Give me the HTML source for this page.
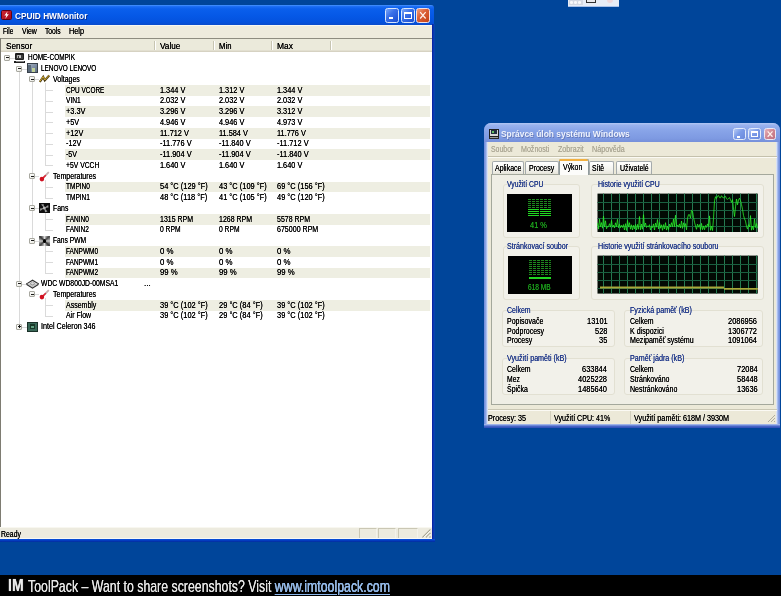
<!DOCTYPE html>
<html><head><meta charset="utf-8"><style>
html,body{margin:0;padding:0;}
body{width:781px;height:596px;overflow:hidden;position:relative;background:#00459A;font-family:"Liberation Sans", sans-serif;}
svg{display:block;}
#root{position:absolute;left:0;top:0;width:781px;height:596px;will-change:transform;}
</style></head><body><div id="root">
<div style="position:absolute;left:567.80px;top:0.00px;width:51.20px;height:7.00px;background:#E6ECF6;border-bottom:1px solid #A8C0E8;box-sizing:border-box;"></div><div style="position:absolute;left:568.50px;top:0.00px;width:14.50px;height:5.20px;background:#D4D8E2;"></div><div style="position:absolute;left:570.20px;top:1.00px;width:2.60px;height:2.60px;background:#F8F8FA;border-radius:50%;"></div><div style="position:absolute;left:574.20px;top:1.00px;width:2.60px;height:2.60px;background:#F8F8FA;border-radius:50%;"></div><div style="position:absolute;left:578.20px;top:1.00px;width:2.60px;height:2.60px;background:#F8F8FA;border-radius:50%;"></div><div style="position:absolute;left:585.50px;top:0.00px;width:10.50px;height:2.80px;border:1.2px solid #303030;border-top:none;box-sizing:border-box;background:#E8E8EC;"></div><div style="position:absolute;left:607.00px;top:0.00px;width:5.50px;height:2.60px;background:#EED8DC;border-radius:0 0 3px 3px;"></div><div style="position:absolute;left:0.00px;top:5.00px;width:434.00px;height:19.50px;background:linear-gradient(#4A96FF 0%,#1A6CF4 8%,#0A5FEC 20%,#0558E6 55%,#0452DE 85%,#0A4CCC 100%);border-radius:0 3px 0 0;"></div><div style="position:absolute;left:431.50px;top:24.00px;width:3.50px;height:517.60px;background:linear-gradient(90deg,#0820A0 0%,#0A28A8 30%,#0840B4 60%,#0546A8 100%);"></div><div style="position:absolute;left:0.00px;top:538.50px;width:434.60px;height:3.10px;background:linear-gradient(#0A52DC,#043CC0 50%,#022C9C);"></div><div style="position:absolute;left:1.20px;top:10.20px;width:10.40px;height:10.20px;background:linear-gradient(135deg,#D02838,#A00818);border:1px solid #600010;box-sizing:border-box;border-radius:1.5px;"></div><svg style="position:absolute;left:1.20px;top:10.20px;" width="11" height="10" viewBox="0 0 11 10"><path d="M6.6 1.2 L3.4 5.6 L5.4 5.6 L4.2 9 L7.8 4.2 L5.8 4.2 Z" fill="#fff"/></svg><div style="position:absolute;left:14.90px;top:11.63px;font-size:8.8px;line-height:8.8px;height:8.8px;color:#fff;font-weight:bold;white-space:pre;transform:scaleX(0.9434);transform-origin:0 0;text-shadow:0.8px 0.8px 0 #0A2C8C;">CPUID HWMonitor</div><div style="position:absolute;left:385.00px;top:8.00px;width:14.00px;height:14.60px;background:linear-gradient(135deg,#7CA8F8,#3A70E8 40%,#2458D8 80%,#1E50D0);border:1px solid #D8E6FC;border-radius:2.5px;box-sizing:border-box;"></div><div style="position:absolute;left:388.92px;top:17.34px;width:3.92px;height:2.04px;background:#fff;"></div><div style="position:absolute;left:401.00px;top:8.00px;width:13.60px;height:14.60px;background:linear-gradient(135deg,#7CA8F8,#3A70E8 40%,#2458D8 80%,#1E50D0);border:1px solid #D8E6FC;border-radius:2.5px;box-sizing:border-box;"></div><div style="position:absolute;left:403.99px;top:11.80px;width:7.62px;height:6.72px;border:1px solid #fff;border-top-width:2px;box-sizing:border-box;"></div><div style="position:absolute;left:416.40px;top:8.00px;width:13.80px;height:14.60px;background:linear-gradient(135deg,#F0A080,#DC6238 40%,#CC4C22 80%,#C04418);border:1px solid #F4E0E0;border-radius:2.5px;box-sizing:border-box;"></div><svg style="position:absolute;left:416.40px;top:8.00px;" width="13.8" height="14.6" viewBox="0 0 13.8 14.6"><path d="M4.14 4.09 L9.66 10.51 M9.66 4.09 L4.14 10.51" stroke="#FFF4EE" stroke-width="1.2"/></svg><div style="position:absolute;left:0.00px;top:24.50px;width:431.50px;height:13.50px;background:#EEEBDD;"></div><div style="position:absolute;left:0.00px;top:24.50px;width:431.50px;height:1.00px;background:#F8F8F2;"></div><div style="position:absolute;left:3.40px;top:27.00px;font-size:8.6px;line-height:8.6px;height:8.6px;color:#000;font-weight:normal;white-space:pre;transform:scaleX(0.7505);transform-origin:0 0;text-shadow:0 0 0.24px #000;">File</div><div style="position:absolute;left:22.00px;top:27.00px;font-size:8.6px;line-height:8.6px;height:8.6px;color:#000;font-weight:normal;white-space:pre;transform:scaleX(0.8047);transform-origin:0 0;text-shadow:0 0 0.24px #000;">View</div><div style="position:absolute;left:45.30px;top:27.00px;font-size:8.6px;line-height:8.6px;height:8.6px;color:#000;font-weight:normal;white-space:pre;transform:scaleX(0.7846);transform-origin:0 0;text-shadow:0 0 0.24px #000;">Tools</div><div style="position:absolute;left:69.30px;top:27.00px;font-size:8.6px;line-height:8.6px;height:8.6px;color:#000;font-weight:normal;white-space:pre;transform:scaleX(0.8481);transform-origin:0 0;text-shadow:0 0 0.24px #000;">Help</div><div style="position:absolute;left:0.00px;top:38.00px;width:431.50px;height:489.00px;background:#fff;"></div><div style="position:absolute;left:0.00px;top:38.00px;width:431.50px;height:1.00px;background:#8E8C80;"></div><div style="position:absolute;left:0.00px;top:38.00px;width:1.00px;height:488.50px;background:#7E7C72;"></div><div style="position:absolute;left:1.00px;top:39.00px;width:430.50px;height:12.00px;background:#EBEADB;"></div><div style="position:absolute;left:1.00px;top:49.50px;width:430.50px;height:1.00px;background:#E2DFD0;"></div><div style="position:absolute;left:1.00px;top:50.50px;width:430.50px;height:1.00px;background:#D6D2C2;"></div><div style="position:absolute;left:154.00px;top:40.50px;width:1.00px;height:9.50px;background:#C7C5B2;"></div><div style="position:absolute;left:155.00px;top:40.50px;width:1.00px;height:9.50px;background:#fff;"></div><div style="position:absolute;left:213.10px;top:40.50px;width:1.00px;height:9.50px;background:#C7C5B2;"></div><div style="position:absolute;left:214.10px;top:40.50px;width:1.00px;height:9.50px;background:#fff;"></div><div style="position:absolute;left:270.70px;top:40.50px;width:1.00px;height:9.50px;background:#C7C5B2;"></div><div style="position:absolute;left:271.70px;top:40.50px;width:1.00px;height:9.50px;background:#fff;"></div><div style="position:absolute;left:330.00px;top:40.50px;width:1.00px;height:9.50px;background:#C7C5B2;"></div><div style="position:absolute;left:331.00px;top:40.50px;width:1.00px;height:9.50px;background:#fff;"></div><div style="position:absolute;left:5.60px;top:41.56px;font-size:8.4px;line-height:8.4px;height:8.4px;color:#000;font-weight:normal;white-space:pre;transform:scaleX(0.9844);transform-origin:0 0;text-shadow:0 0 0.24px #000;">Sensor</div><div style="position:absolute;left:159.80px;top:41.56px;font-size:8.4px;line-height:8.4px;height:8.4px;color:#000;font-weight:normal;white-space:pre;transform:scaleX(0.9775);transform-origin:0 0;text-shadow:0 0 0.24px #000;">Value</div><div style="position:absolute;left:218.70px;top:41.56px;font-size:8.4px;line-height:8.4px;height:8.4px;color:#000;font-weight:normal;white-space:pre;transform:scaleX(0.9235);transform-origin:0 0;text-shadow:0 0 0.24px #000;">Min</div><div style="position:absolute;left:277.00px;top:41.56px;font-size:8.4px;line-height:8.4px;height:8.4px;color:#000;font-weight:normal;white-space:pre;transform:scaleX(1.0083);transform-origin:0 0;text-shadow:0 0 0.24px #000;">Max</div><div style="position:absolute;left:19.20px;top:66.72px;width:1.00px;height:260.00px;background:#DADADA;"></div><div style="position:absolute;left:32.00px;top:77.47px;width:1.00px;height:163.25px;background:#DADADA;"></div><div style="position:absolute;left:32.00px;top:292.48px;width:1.00px;height:2.00px;background:#DADADA;"></div><div style="position:absolute;left:45.00px;top:83.47px;width:1.00px;height:82.00px;background:#DADADA;"></div><div style="position:absolute;left:45.00px;top:180.22px;width:1.00px;height:17.50px;background:#DADADA;"></div><div style="position:absolute;left:45.00px;top:212.47px;width:1.00px;height:17.50px;background:#DADADA;"></div><div style="position:absolute;left:45.00px;top:244.72px;width:1.00px;height:28.25px;background:#DADADA;"></div><div style="position:absolute;left:45.00px;top:298.48px;width:1.00px;height:17.50px;background:#DADADA;"></div><div style="position:absolute;left:10.00px;top:57.98px;width:4.50px;height:1.00px;background:#DADADA;"></div><div style="position:absolute;left:19.20px;top:68.72px;width:-2.80px;height:1.00px;background:#DADADA;"></div><div style="position:absolute;left:22.40px;top:68.72px;width:4.40px;height:1.00px;background:#DADADA;"></div><div style="position:absolute;left:32.00px;top:79.47px;width:-2.60px;height:1.00px;background:#DADADA;"></div><div style="position:absolute;left:35.40px;top:79.47px;width:4.00px;height:1.00px;background:#DADADA;"></div><div style="position:absolute;left:64.80px;top:84.85px;width:365.50px;height:10.75px;background:#EEEEE2;"></div><div style="position:absolute;left:45.00px;top:90.22px;width:7.50px;height:1.00px;background:#DADADA;"></div><div style="position:absolute;left:45.00px;top:100.97px;width:7.50px;height:1.00px;background:#DADADA;"></div><div style="position:absolute;left:64.80px;top:106.35px;width:365.50px;height:10.75px;background:#EEEEE2;"></div><div style="position:absolute;left:45.00px;top:111.72px;width:7.50px;height:1.00px;background:#DADADA;"></div><div style="position:absolute;left:45.00px;top:122.47px;width:7.50px;height:1.00px;background:#DADADA;"></div><div style="position:absolute;left:64.80px;top:127.85px;width:365.50px;height:10.75px;background:#EEEEE2;"></div><div style="position:absolute;left:45.00px;top:133.22px;width:7.50px;height:1.00px;background:#DADADA;"></div><div style="position:absolute;left:45.00px;top:143.97px;width:7.50px;height:1.00px;background:#DADADA;"></div><div style="position:absolute;left:64.80px;top:149.35px;width:365.50px;height:10.75px;background:#EEEEE2;"></div><div style="position:absolute;left:45.00px;top:154.72px;width:7.50px;height:1.00px;background:#DADADA;"></div><div style="position:absolute;left:45.00px;top:165.47px;width:7.50px;height:1.00px;background:#DADADA;"></div><div style="position:absolute;left:32.00px;top:176.22px;width:-2.60px;height:1.00px;background:#DADADA;"></div><div style="position:absolute;left:35.40px;top:176.22px;width:4.00px;height:1.00px;background:#DADADA;"></div><div style="position:absolute;left:64.80px;top:181.60px;width:365.50px;height:10.75px;background:#EEEEE2;"></div><div style="position:absolute;left:45.00px;top:186.97px;width:7.50px;height:1.00px;background:#DADADA;"></div><div style="position:absolute;left:45.00px;top:197.72px;width:7.50px;height:1.00px;background:#DADADA;"></div><div style="position:absolute;left:32.00px;top:208.47px;width:-2.60px;height:1.00px;background:#DADADA;"></div><div style="position:absolute;left:35.40px;top:208.47px;width:4.00px;height:1.00px;background:#DADADA;"></div><div style="position:absolute;left:64.80px;top:213.85px;width:365.50px;height:10.75px;background:#EEEEE2;"></div><div style="position:absolute;left:45.00px;top:219.22px;width:7.50px;height:1.00px;background:#DADADA;"></div><div style="position:absolute;left:45.00px;top:229.97px;width:7.50px;height:1.00px;background:#DADADA;"></div><div style="position:absolute;left:32.00px;top:240.72px;width:-2.60px;height:1.00px;background:#DADADA;"></div><div style="position:absolute;left:35.40px;top:240.72px;width:4.00px;height:1.00px;background:#DADADA;"></div><div style="position:absolute;left:64.80px;top:246.10px;width:365.50px;height:10.75px;background:#EEEEE2;"></div><div style="position:absolute;left:45.00px;top:251.47px;width:7.50px;height:1.00px;background:#DADADA;"></div><div style="position:absolute;left:45.00px;top:262.23px;width:7.50px;height:1.00px;background:#DADADA;"></div><div style="position:absolute;left:64.80px;top:267.60px;width:365.50px;height:10.75px;background:#EEEEE2;"></div><div style="position:absolute;left:45.00px;top:272.98px;width:7.50px;height:1.00px;background:#DADADA;"></div><div style="position:absolute;left:19.20px;top:283.73px;width:-2.80px;height:1.00px;background:#DADADA;"></div><div style="position:absolute;left:22.40px;top:283.73px;width:4.40px;height:1.00px;background:#DADADA;"></div><div style="position:absolute;left:32.00px;top:294.48px;width:-2.60px;height:1.00px;background:#DADADA;"></div><div style="position:absolute;left:35.40px;top:294.48px;width:4.00px;height:1.00px;background:#DADADA;"></div><div style="position:absolute;left:64.80px;top:299.85px;width:365.50px;height:10.75px;background:#EEEEE2;"></div><div style="position:absolute;left:45.00px;top:305.23px;width:7.50px;height:1.00px;background:#DADADA;"></div><div style="position:absolute;left:45.00px;top:315.98px;width:7.50px;height:1.00px;background:#DADADA;"></div><div style="position:absolute;left:19.20px;top:326.73px;width:-2.80px;height:1.00px;background:#DADADA;"></div><div style="position:absolute;left:22.40px;top:326.73px;width:4.40px;height:1.00px;background:#DADADA;"></div><div style="position:absolute;left:27.80px;top:53.40px;font-size:8.6px;line-height:8.6px;height:8.6px;color:#000;font-weight:normal;white-space:pre;transform:scaleX(0.7508);transform-origin:0 0;text-shadow:0 0 0.24px #000;">HOME-COMPIK</div><div style="position:absolute;left:4.00px;top:54.98px;width:6.00px;height:6.00px;background:linear-gradient(135deg,#fff,#E8E8E0);border:1px solid #A8A8A0;border-radius:1px;box-sizing:border-box;"></div><div style="position:absolute;left:5.50px;top:57.48px;width:3.00px;height:1.00px;background:#1a1a1a;"></div><div style="position:absolute;left:15.00px;top:53.20px;width:9.00px;height:7.00px;background:#1E1E1E;border-radius:1px;"></div><div style="position:absolute;left:16.40px;top:54.50px;width:6.20px;height:4.30px;background:#3A3A3A;"></div><div style="position:absolute;left:17.20px;top:55.20px;width:4.20px;height:3.00px;border:1px solid #B0B0B0;border-right:none;border-bottom:none;box-sizing:border-box;"></div><div style="position:absolute;left:18.60px;top:56.40px;width:2.80px;height:1.80px;background:#C8C8C8;"></div><div style="position:absolute;left:14.40px;top:60.60px;width:10.30px;height:2.00px;background:#1E1E1E;"></div><div style="position:absolute;left:15.50px;top:61.20px;width:8.00px;height:0.70px;background:#888;"></div><div style="position:absolute;left:40.50px;top:64.15px;font-size:8.6px;line-height:8.6px;height:8.6px;color:#000;font-weight:normal;white-space:pre;transform:scaleX(0.7480);transform-origin:0 0;text-shadow:0 0 0.24px #000;">LENOVO LENOVO</div><div style="position:absolute;left:16.40px;top:65.72px;width:6.00px;height:6.00px;background:linear-gradient(135deg,#fff,#E8E8E0);border:1px solid #A8A8A0;border-radius:1px;box-sizing:border-box;"></div><div style="position:absolute;left:17.90px;top:68.22px;width:3.00px;height:1.00px;background:#1a1a1a;"></div><div style="position:absolute;left:26.80px;top:63.20px;width:11.10px;height:10.30px;background:linear-gradient(135deg,#A8B4C0,#7888A0 60%,#607080);border:1px solid #38404a;box-sizing:border-box;"></div><div style="position:absolute;left:28.00px;top:64.50px;width:3.00px;height:7.50px;background:#586878;"></div><div style="position:absolute;left:31.80px;top:68.00px;width:3.70px;height:4.00px;background:#C0D098;"></div><div style="position:absolute;left:53.40px;top:74.90px;font-size:8.6px;line-height:8.6px;height:8.6px;color:#000;font-weight:normal;white-space:pre;transform:scaleX(0.8135);transform-origin:0 0;text-shadow:0 0 0.24px #000;">Voltages</div><div style="position:absolute;left:29.40px;top:76.47px;width:6.00px;height:6.00px;background:linear-gradient(135deg,#fff,#E8E8E0);border:1px solid #A8A8A0;border-radius:1px;box-sizing:border-box;"></div><div style="position:absolute;left:30.90px;top:78.97px;width:3.00px;height:1.00px;background:#1a1a1a;"></div><svg style="position:absolute;left:39.40px;top:74.47px;" width="11" height="10" viewBox="0 0 11 10"><path d="M0.8 8 L4.2 3 L5.8 6.4 L10.2 1.6" stroke="#4A3A10" stroke-width="2.2" fill="none"/><path d="M0.8 7.6 L4.2 2.6 L5.8 6 L10.2 1.2" stroke="#D0A830" stroke-width="1.0" fill="none"/></svg><div style="position:absolute;left:65.90px;top:85.65px;font-size:8.6px;line-height:8.6px;height:8.6px;color:#000;font-weight:normal;white-space:pre;transform:scaleX(0.7510);transform-origin:0 0;text-shadow:0 0 0.24px #000;">CPU VCORE</div><div style="position:absolute;left:159.80px;top:85.65px;font-size:8.6px;line-height:8.6px;height:8.6px;color:#000;font-weight:normal;white-space:pre;transform:scaleX(0.8542);transform-origin:0 0;text-shadow:0 0 0.24px #000;">1.344 V</div><div style="position:absolute;left:218.70px;top:85.65px;font-size:8.6px;line-height:8.6px;height:8.6px;color:#000;font-weight:normal;white-space:pre;transform:scaleX(0.8542);transform-origin:0 0;text-shadow:0 0 0.24px #000;">1.312 V</div><div style="position:absolute;left:277.00px;top:85.65px;font-size:8.6px;line-height:8.6px;height:8.6px;color:#000;font-weight:normal;white-space:pre;transform:scaleX(0.8542);transform-origin:0 0;text-shadow:0 0 0.24px #000;">1.344 V</div><div style="position:absolute;left:65.90px;top:96.40px;font-size:8.6px;line-height:8.6px;height:8.6px;color:#000;font-weight:normal;white-space:pre;transform:scaleX(0.7723);transform-origin:0 0;text-shadow:0 0 0.24px #000;">VIN1</div><div style="position:absolute;left:159.80px;top:96.40px;font-size:8.6px;line-height:8.6px;height:8.6px;color:#000;font-weight:normal;white-space:pre;transform:scaleX(0.8542);transform-origin:0 0;text-shadow:0 0 0.24px #000;">2.032 V</div><div style="position:absolute;left:218.70px;top:96.40px;font-size:8.6px;line-height:8.6px;height:8.6px;color:#000;font-weight:normal;white-space:pre;transform:scaleX(0.8542);transform-origin:0 0;text-shadow:0 0 0.24px #000;">2.032 V</div><div style="position:absolute;left:277.00px;top:96.40px;font-size:8.6px;line-height:8.6px;height:8.6px;color:#000;font-weight:normal;white-space:pre;transform:scaleX(0.8542);transform-origin:0 0;text-shadow:0 0 0.24px #000;">2.032 V</div><div style="position:absolute;left:65.90px;top:107.15px;font-size:8.6px;line-height:8.6px;height:8.6px;color:#000;font-weight:normal;white-space:pre;transform:scaleX(0.8603);transform-origin:0 0;text-shadow:0 0 0.24px #000;">+3.3V</div><div style="position:absolute;left:159.80px;top:107.15px;font-size:8.6px;line-height:8.6px;height:8.6px;color:#000;font-weight:normal;white-space:pre;transform:scaleX(0.8542);transform-origin:0 0;text-shadow:0 0 0.24px #000;">3.296 V</div><div style="position:absolute;left:218.70px;top:107.15px;font-size:8.6px;line-height:8.6px;height:8.6px;color:#000;font-weight:normal;white-space:pre;transform:scaleX(0.8542);transform-origin:0 0;text-shadow:0 0 0.24px #000;">3.296 V</div><div style="position:absolute;left:277.00px;top:107.15px;font-size:8.6px;line-height:8.6px;height:8.6px;color:#000;font-weight:normal;white-space:pre;transform:scaleX(0.8542);transform-origin:0 0;text-shadow:0 0 0.24px #000;">3.312 V</div><div style="position:absolute;left:65.90px;top:117.90px;font-size:8.6px;line-height:8.6px;height:8.6px;color:#000;font-weight:normal;white-space:pre;transform:scaleX(0.8456);transform-origin:0 0;text-shadow:0 0 0.24px #000;">+5V</div><div style="position:absolute;left:159.80px;top:117.90px;font-size:8.6px;line-height:8.6px;height:8.6px;color:#000;font-weight:normal;white-space:pre;transform:scaleX(0.8542);transform-origin:0 0;text-shadow:0 0 0.24px #000;">4.946 V</div><div style="position:absolute;left:218.70px;top:117.90px;font-size:8.6px;line-height:8.6px;height:8.6px;color:#000;font-weight:normal;white-space:pre;transform:scaleX(0.8542);transform-origin:0 0;text-shadow:0 0 0.24px #000;">4.946 V</div><div style="position:absolute;left:277.00px;top:117.90px;font-size:8.6px;line-height:8.6px;height:8.6px;color:#000;font-weight:normal;white-space:pre;transform:scaleX(0.8542);transform-origin:0 0;text-shadow:0 0 0.24px #000;">4.973 V</div><div style="position:absolute;left:65.90px;top:128.65px;font-size:8.6px;line-height:8.6px;height:8.6px;color:#000;font-weight:normal;white-space:pre;transform:scaleX(0.8502);transform-origin:0 0;text-shadow:0 0 0.24px #000;">+12V</div><div style="position:absolute;left:159.80px;top:128.65px;font-size:8.6px;line-height:8.6px;height:8.6px;color:#000;font-weight:normal;white-space:pre;transform:scaleX(0.8557);transform-origin:0 0;text-shadow:0 0 0.24px #000;">11.712 V</div><div style="position:absolute;left:218.70px;top:128.65px;font-size:8.6px;line-height:8.6px;height:8.6px;color:#000;font-weight:normal;white-space:pre;transform:scaleX(0.8557);transform-origin:0 0;text-shadow:0 0 0.24px #000;">11.584 V</div><div style="position:absolute;left:277.00px;top:128.65px;font-size:8.6px;line-height:8.6px;height:8.6px;color:#000;font-weight:normal;white-space:pre;transform:scaleX(0.8557);transform-origin:0 0;text-shadow:0 0 0.24px #000;">11.776 V</div><div style="position:absolute;left:65.90px;top:139.40px;font-size:8.6px;line-height:8.6px;height:8.6px;color:#000;font-weight:normal;white-space:pre;transform:scaleX(0.8388);transform-origin:0 0;text-shadow:0 0 0.24px #000;">-12V</div><div style="position:absolute;left:159.80px;top:139.40px;font-size:8.6px;line-height:8.6px;height:8.6px;color:#000;font-weight:normal;white-space:pre;transform:scaleX(0.8627);transform-origin:0 0;text-shadow:0 0 0.24px #000;">-11.776 V</div><div style="position:absolute;left:218.70px;top:139.40px;font-size:8.6px;line-height:8.6px;height:8.6px;color:#000;font-weight:normal;white-space:pre;transform:scaleX(0.8627);transform-origin:0 0;text-shadow:0 0 0.24px #000;">-11.840 V</div><div style="position:absolute;left:277.00px;top:139.40px;font-size:8.6px;line-height:8.6px;height:8.6px;color:#000;font-weight:normal;white-space:pre;transform:scaleX(0.8627);transform-origin:0 0;text-shadow:0 0 0.24px #000;">-11.712 V</div><div style="position:absolute;left:65.90px;top:150.15px;font-size:8.6px;line-height:8.6px;height:8.6px;color:#000;font-weight:normal;white-space:pre;transform:scaleX(0.8294);transform-origin:0 0;text-shadow:0 0 0.24px #000;">-5V</div><div style="position:absolute;left:159.80px;top:150.15px;font-size:8.6px;line-height:8.6px;height:8.6px;color:#000;font-weight:normal;white-space:pre;transform:scaleX(0.8627);transform-origin:0 0;text-shadow:0 0 0.24px #000;">-11.904 V</div><div style="position:absolute;left:218.70px;top:150.15px;font-size:8.6px;line-height:8.6px;height:8.6px;color:#000;font-weight:normal;white-space:pre;transform:scaleX(0.8627);transform-origin:0 0;text-shadow:0 0 0.24px #000;">-11.904 V</div><div style="position:absolute;left:277.00px;top:150.15px;font-size:8.6px;line-height:8.6px;height:8.6px;color:#000;font-weight:normal;white-space:pre;transform:scaleX(0.8627);transform-origin:0 0;text-shadow:0 0 0.24px #000;">-11.840 V</div><div style="position:absolute;left:65.90px;top:160.90px;font-size:8.6px;line-height:8.6px;height:8.6px;color:#000;font-weight:normal;white-space:pre;transform:scaleX(0.7912);transform-origin:0 0;text-shadow:0 0 0.24px #000;">+5V VCCH</div><div style="position:absolute;left:159.80px;top:160.90px;font-size:8.6px;line-height:8.6px;height:8.6px;color:#000;font-weight:normal;white-space:pre;transform:scaleX(0.8542);transform-origin:0 0;text-shadow:0 0 0.24px #000;">1.640 V</div><div style="position:absolute;left:218.70px;top:160.90px;font-size:8.6px;line-height:8.6px;height:8.6px;color:#000;font-weight:normal;white-space:pre;transform:scaleX(0.8542);transform-origin:0 0;text-shadow:0 0 0.24px #000;">1.640 V</div><div style="position:absolute;left:277.00px;top:160.90px;font-size:8.6px;line-height:8.6px;height:8.6px;color:#000;font-weight:normal;white-space:pre;transform:scaleX(0.8542);transform-origin:0 0;text-shadow:0 0 0.24px #000;">1.640 V</div><div style="position:absolute;left:53.40px;top:171.65px;font-size:8.6px;line-height:8.6px;height:8.6px;color:#000;font-weight:normal;white-space:pre;transform:scaleX(0.8199);transform-origin:0 0;text-shadow:0 0 0.24px #000;">Temperatures</div><div style="position:absolute;left:29.40px;top:173.22px;width:6.00px;height:6.00px;background:linear-gradient(135deg,#fff,#E8E8E0);border:1px solid #A8A8A0;border-radius:1px;box-sizing:border-box;"></div><div style="position:absolute;left:30.90px;top:175.72px;width:3.00px;height:1.00px;background:#1a1a1a;"></div><svg style="position:absolute;left:39.40px;top:171.22px;" width="11" height="11" viewBox="0 0 11 11"><path d="M3.2 7.8 L9.8 1.2" stroke="#C8B0B0" stroke-width="1.8"/><path d="M3 8 L6.8 4.2" stroke="#E02838" stroke-width="1.6"/><circle cx="2.9" cy="8.1" r="2.3" fill="#D01020"/></svg><div style="position:absolute;left:65.90px;top:182.40px;font-size:8.6px;line-height:8.6px;height:8.6px;color:#000;font-weight:normal;white-space:pre;transform:scaleX(0.7602);transform-origin:0 0;text-shadow:0 0 0.24px #000;">TMPIN0</div><div style="position:absolute;left:159.80px;top:182.40px;font-size:8.6px;line-height:8.6px;height:8.6px;color:#000;font-weight:normal;white-space:pre;transform:scaleX(0.8684);transform-origin:0 0;text-shadow:0 0 0.24px #000;">54 °C (129 °F)</div><div style="position:absolute;left:218.70px;top:182.40px;font-size:8.6px;line-height:8.6px;height:8.6px;color:#000;font-weight:normal;white-space:pre;transform:scaleX(0.8684);transform-origin:0 0;text-shadow:0 0 0.24px #000;">43 °C (109 °F)</div><div style="position:absolute;left:277.00px;top:182.40px;font-size:8.6px;line-height:8.6px;height:8.6px;color:#000;font-weight:normal;white-space:pre;transform:scaleX(0.8684);transform-origin:0 0;text-shadow:0 0 0.24px #000;">69 °C (156 °F)</div><div style="position:absolute;left:65.90px;top:193.15px;font-size:8.6px;line-height:8.6px;height:8.6px;color:#000;font-weight:normal;white-space:pre;transform:scaleX(0.7602);transform-origin:0 0;text-shadow:0 0 0.24px #000;">TMPIN1</div><div style="position:absolute;left:159.80px;top:193.15px;font-size:8.6px;line-height:8.6px;height:8.6px;color:#000;font-weight:normal;white-space:pre;transform:scaleX(0.8684);transform-origin:0 0;text-shadow:0 0 0.24px #000;">48 °C (118 °F)</div><div style="position:absolute;left:218.70px;top:193.15px;font-size:8.6px;line-height:8.6px;height:8.6px;color:#000;font-weight:normal;white-space:pre;transform:scaleX(0.8684);transform-origin:0 0;text-shadow:0 0 0.24px #000;">41 °C (105 °F)</div><div style="position:absolute;left:277.00px;top:193.15px;font-size:8.6px;line-height:8.6px;height:8.6px;color:#000;font-weight:normal;white-space:pre;transform:scaleX(0.8684);transform-origin:0 0;text-shadow:0 0 0.24px #000;">49 °C (120 °F)</div><div style="position:absolute;left:53.40px;top:203.90px;font-size:8.6px;line-height:8.6px;height:8.6px;color:#000;font-weight:normal;white-space:pre;transform:scaleX(0.8045);transform-origin:0 0;text-shadow:0 0 0.24px #000;">Fans</div><div style="position:absolute;left:29.40px;top:205.47px;width:6.00px;height:6.00px;background:linear-gradient(135deg,#fff,#E8E8E0);border:1px solid #A8A8A0;border-radius:1px;box-sizing:border-box;"></div><div style="position:absolute;left:30.90px;top:207.97px;width:3.00px;height:1.00px;background:#1a1a1a;"></div><div style="position:absolute;left:39.40px;top:203.47px;width:10.60px;height:10.00px;background:#0E0E0E;"></div><svg style="position:absolute;left:39.40px;top:203.47px;" width="11" height="10" viewBox="0 0 11 10"><g fill="#9A9A9A"><path d="M5.3 5 L2 1.5 L4.5 1 Z"/><path d="M5.3 5 L9.2 2 L9.5 4.5 Z"/><path d="M5.3 5 L8.5 8.6 L6 9.2 Z"/><path d="M5.3 5 L1.2 8 L1 5.6 Z"/></g><circle cx="5.3" cy="5" r="1.5" fill="#BBB"/></svg><div style="position:absolute;left:65.90px;top:214.65px;font-size:8.6px;line-height:8.6px;height:8.6px;color:#000;font-weight:normal;white-space:pre;transform:scaleX(0.7607);transform-origin:0 0;text-shadow:0 0 0.24px #000;">FANIN0</div><div style="position:absolute;left:159.80px;top:214.65px;font-size:8.6px;line-height:8.6px;height:8.6px;color:#000;font-weight:normal;white-space:pre;transform:scaleX(0.8117);transform-origin:0 0;text-shadow:0 0 0.24px #000;">1315 RPM</div><div style="position:absolute;left:218.70px;top:214.65px;font-size:8.6px;line-height:8.6px;height:8.6px;color:#000;font-weight:normal;white-space:pre;transform:scaleX(0.8117);transform-origin:0 0;text-shadow:0 0 0.24px #000;">1268 RPM</div><div style="position:absolute;left:277.00px;top:214.65px;font-size:8.6px;line-height:8.6px;height:8.6px;color:#000;font-weight:normal;white-space:pre;transform:scaleX(0.8117);transform-origin:0 0;text-shadow:0 0 0.24px #000;">5578 RPM</div><div style="position:absolute;left:65.90px;top:225.40px;font-size:8.6px;line-height:8.6px;height:8.6px;color:#000;font-weight:normal;white-space:pre;transform:scaleX(0.7607);transform-origin:0 0;text-shadow:0 0 0.24px #000;">FANIN2</div><div style="position:absolute;left:159.80px;top:225.40px;font-size:8.6px;line-height:8.6px;height:8.6px;color:#000;font-weight:normal;white-space:pre;transform:scaleX(0.7825);transform-origin:0 0;text-shadow:0 0 0.24px #000;">0 RPM</div><div style="position:absolute;left:218.70px;top:225.40px;font-size:8.6px;line-height:8.6px;height:8.6px;color:#000;font-weight:normal;white-space:pre;transform:scaleX(0.7825);transform-origin:0 0;text-shadow:0 0 0.24px #000;">0 RPM</div><div style="position:absolute;left:277.00px;top:225.40px;font-size:8.6px;line-height:8.6px;height:8.6px;color:#000;font-weight:normal;white-space:pre;transform:scaleX(0.8219);transform-origin:0 0;text-shadow:0 0 0.24px #000;">675000 RPM</div><div style="position:absolute;left:53.40px;top:236.15px;font-size:8.6px;line-height:8.6px;height:8.6px;color:#000;font-weight:normal;white-space:pre;transform:scaleX(0.7813);transform-origin:0 0;text-shadow:0 0 0.24px #000;">Fans PWM</div><div style="position:absolute;left:29.40px;top:237.72px;width:6.00px;height:6.00px;background:linear-gradient(135deg,#fff,#E8E8E0);border:1px solid #A8A8A0;border-radius:1px;box-sizing:border-box;"></div><div style="position:absolute;left:30.90px;top:240.22px;width:3.00px;height:1.00px;background:#1a1a1a;"></div><div style="position:absolute;left:39.40px;top:235.92px;width:10.60px;height:10.50px;background:conic-gradient(#DDD,#444,#CCC,#333,#DDD,#444,#CCC,#333,#DDD);"></div><div style="position:absolute;left:42.90px;top:239.42px;width:3.50px;height:3.50px;background:#000;border-radius:50%;"></div><div style="position:absolute;left:65.90px;top:246.90px;font-size:8.6px;line-height:8.6px;height:8.6px;color:#000;font-weight:normal;white-space:pre;transform:scaleX(0.7552);transform-origin:0 0;text-shadow:0 0 0.24px #000;">FANPWM0</div><div style="position:absolute;left:159.80px;top:246.90px;font-size:8.6px;line-height:8.6px;height:8.6px;color:#000;font-weight:normal;white-space:pre;transform:scaleX(0.9199);transform-origin:0 0;text-shadow:0 0 0.24px #000;">0 %</div><div style="position:absolute;left:218.70px;top:246.90px;font-size:8.6px;line-height:8.6px;height:8.6px;color:#000;font-weight:normal;white-space:pre;transform:scaleX(0.9199);transform-origin:0 0;text-shadow:0 0 0.24px #000;">0 %</div><div style="position:absolute;left:277.00px;top:246.90px;font-size:8.6px;line-height:8.6px;height:8.6px;color:#000;font-weight:normal;white-space:pre;transform:scaleX(0.9199);transform-origin:0 0;text-shadow:0 0 0.24px #000;">0 %</div><div style="position:absolute;left:65.90px;top:257.65px;font-size:8.6px;line-height:8.6px;height:8.6px;color:#000;font-weight:normal;white-space:pre;transform:scaleX(0.7552);transform-origin:0 0;text-shadow:0 0 0.24px #000;">FANPWM1</div><div style="position:absolute;left:159.80px;top:257.65px;font-size:8.6px;line-height:8.6px;height:8.6px;color:#000;font-weight:normal;white-space:pre;transform:scaleX(0.9199);transform-origin:0 0;text-shadow:0 0 0.24px #000;">0 %</div><div style="position:absolute;left:218.70px;top:257.65px;font-size:8.6px;line-height:8.6px;height:8.6px;color:#000;font-weight:normal;white-space:pre;transform:scaleX(0.9199);transform-origin:0 0;text-shadow:0 0 0.24px #000;">0 %</div><div style="position:absolute;left:277.00px;top:257.65px;font-size:8.6px;line-height:8.6px;height:8.6px;color:#000;font-weight:normal;white-space:pre;transform:scaleX(0.9199);transform-origin:0 0;text-shadow:0 0 0.24px #000;">0 %</div><div style="position:absolute;left:65.90px;top:268.40px;font-size:8.6px;line-height:8.6px;height:8.6px;color:#000;font-weight:normal;white-space:pre;transform:scaleX(0.7552);transform-origin:0 0;text-shadow:0 0 0.24px #000;">FANPWM2</div><div style="position:absolute;left:159.80px;top:268.40px;font-size:8.6px;line-height:8.6px;height:8.6px;color:#000;font-weight:normal;white-space:pre;transform:scaleX(0.9066);transform-origin:0 0;text-shadow:0 0 0.24px #000;">99 %</div><div style="position:absolute;left:218.70px;top:268.40px;font-size:8.6px;line-height:8.6px;height:8.6px;color:#000;font-weight:normal;white-space:pre;transform:scaleX(0.9066);transform-origin:0 0;text-shadow:0 0 0.24px #000;">99 %</div><div style="position:absolute;left:277.00px;top:268.40px;font-size:8.6px;line-height:8.6px;height:8.6px;color:#000;font-weight:normal;white-space:pre;transform:scaleX(0.9066);transform-origin:0 0;text-shadow:0 0 0.24px #000;">99 %</div><div style="position:absolute;left:40.50px;top:279.15px;font-size:8.6px;line-height:8.6px;height:8.6px;color:#000;font-weight:normal;white-space:pre;transform:scaleX(0.7886);transform-origin:0 0;text-shadow:0 0 0.24px #000;">WDC WD800JD-00MSA1</div><div style="position:absolute;left:16.40px;top:280.73px;width:6.00px;height:6.00px;background:linear-gradient(135deg,#fff,#E8E8E0);border:1px solid #A8A8A0;border-radius:1px;box-sizing:border-box;"></div><div style="position:absolute;left:17.90px;top:283.23px;width:3.00px;height:1.00px;background:#1a1a1a;"></div><svg style="position:absolute;left:26.00px;top:278.73px;" width="13" height="10" viewBox="0 0 13 10"><path d="M1 4.6 L6.5 1.2 L12 4.6 L6.5 8 Z" fill="#F4F4F4" stroke="#303030" stroke-width="1.1"/><path d="M1 4.6 L1 5.8 L6.5 9.2 L12 5.8 L12 4.6" fill="#C8C8C8" stroke="#303030" stroke-width="1.1"/><path d="M4 4.6 L6.5 3.1 L9 4.6 L6.5 6.1 Z" fill="none" stroke="#909090" stroke-width="0.8"/></svg><div style="position:absolute;left:144.00px;top:279.15px;font-size:8.6px;line-height:8.6px;height:8.6px;color:#000;font-weight:normal;white-space:pre;transform:scaleX(0.9460);transform-origin:0 0;text-shadow:0 0 0.24px #000;">...</div><div style="position:absolute;left:53.40px;top:289.90px;font-size:8.6px;line-height:8.6px;height:8.6px;color:#000;font-weight:normal;white-space:pre;transform:scaleX(0.8199);transform-origin:0 0;text-shadow:0 0 0.24px #000;">Temperatures</div><div style="position:absolute;left:29.40px;top:291.48px;width:6.00px;height:6.00px;background:linear-gradient(135deg,#fff,#E8E8E0);border:1px solid #A8A8A0;border-radius:1px;box-sizing:border-box;"></div><div style="position:absolute;left:30.90px;top:293.98px;width:3.00px;height:1.00px;background:#1a1a1a;"></div><svg style="position:absolute;left:39.40px;top:289.48px;" width="11" height="11" viewBox="0 0 11 11"><path d="M3.2 7.8 L9.8 1.2" stroke="#C8B0B0" stroke-width="1.8"/><path d="M3 8 L6.8 4.2" stroke="#E02838" stroke-width="1.6"/><circle cx="2.9" cy="8.1" r="2.3" fill="#D01020"/></svg><div style="position:absolute;left:65.90px;top:300.65px;font-size:8.6px;line-height:8.6px;height:8.6px;color:#000;font-weight:normal;white-space:pre;transform:scaleX(0.8151);transform-origin:0 0;text-shadow:0 0 0.24px #000;">Assembly</div><div style="position:absolute;left:159.80px;top:300.65px;font-size:8.6px;line-height:8.6px;height:8.6px;color:#000;font-weight:normal;white-space:pre;transform:scaleX(0.8684);transform-origin:0 0;text-shadow:0 0 0.24px #000;">39 °C (102 °F)</div><div style="position:absolute;left:218.70px;top:300.65px;font-size:8.6px;line-height:8.6px;height:8.6px;color:#000;font-weight:normal;white-space:pre;transform:scaleX(0.8687);transform-origin:0 0;text-shadow:0 0 0.24px #000;">29 °C (84 °F)</div><div style="position:absolute;left:277.00px;top:300.65px;font-size:8.6px;line-height:8.6px;height:8.6px;color:#000;font-weight:normal;white-space:pre;transform:scaleX(0.8684);transform-origin:0 0;text-shadow:0 0 0.24px #000;">39 °C (102 °F)</div><div style="position:absolute;left:65.90px;top:311.40px;font-size:8.6px;line-height:8.6px;height:8.6px;color:#000;font-weight:normal;white-space:pre;transform:scaleX(0.8067);transform-origin:0 0;text-shadow:0 0 0.24px #000;">Air Flow</div><div style="position:absolute;left:159.80px;top:311.40px;font-size:8.6px;line-height:8.6px;height:8.6px;color:#000;font-weight:normal;white-space:pre;transform:scaleX(0.8684);transform-origin:0 0;text-shadow:0 0 0.24px #000;">39 °C (102 °F)</div><div style="position:absolute;left:218.70px;top:311.40px;font-size:8.6px;line-height:8.6px;height:8.6px;color:#000;font-weight:normal;white-space:pre;transform:scaleX(0.8687);transform-origin:0 0;text-shadow:0 0 0.24px #000;">29 °C (84 °F)</div><div style="position:absolute;left:277.00px;top:311.40px;font-size:8.6px;line-height:8.6px;height:8.6px;color:#000;font-weight:normal;white-space:pre;transform:scaleX(0.8684);transform-origin:0 0;text-shadow:0 0 0.24px #000;">39 °C (102 °F)</div><div style="position:absolute;left:40.50px;top:322.15px;font-size:8.6px;line-height:8.6px;height:8.6px;color:#000;font-weight:normal;white-space:pre;transform:scaleX(0.8336);transform-origin:0 0;text-shadow:0 0 0.24px #000;">Intel Celeron 346</div><div style="position:absolute;left:16.40px;top:323.73px;width:6.00px;height:6.00px;background:linear-gradient(135deg,#fff,#E8E8E0);border:1px solid #A8A8A0;border-radius:1px;box-sizing:border-box;"></div><div style="position:absolute;left:17.90px;top:326.23px;width:3.00px;height:1.00px;background:#1a1a1a;"></div><div style="position:absolute;left:18.90px;top:325.23px;width:1.00px;height:3.00px;background:#1a1a1a;"></div><div style="position:absolute;left:27.00px;top:321.60px;width:10.60px;height:10.00px;background:#3A6858;border:1px solid #1A3028;box-sizing:border-box;"></div><div style="position:absolute;left:29.80px;top:324.40px;width:5.00px;height:4.40px;background:#183828;"></div><div style="position:absolute;left:31.00px;top:325.60px;width:2.60px;height:2.00px;background:#60A080;"></div><div style="position:absolute;left:0.00px;top:526.50px;width:431.50px;height:12.00px;background:#EDEBDF;"></div><div style="position:absolute;left:0.00px;top:537.50px;width:431.50px;height:1.00px;background:#F8F8F4;"></div><div style="position:absolute;left:0.00px;top:526.50px;width:431.50px;height:1.00px;background:#F8F7F0;"></div><div style="position:absolute;left:1.00px;top:529.80px;font-size:8.6px;line-height:8.6px;height:8.6px;color:#000;font-weight:normal;white-space:pre;transform:scaleX(0.8045);transform-origin:0 0;text-shadow:0 0 0.24px #000;">Ready</div><div style="position:absolute;left:359.20px;top:527.80px;width:17.40px;height:10.20px;border:1px solid #CAC7B4;border-right-color:#F4F3EC;border-bottom:none;box-sizing:border-box;"></div><div style="position:absolute;left:377.80px;top:527.80px;width:18.60px;height:10.20px;border:1px solid #CAC7B4;border-right-color:#F4F3EC;border-bottom:none;box-sizing:border-box;"></div><div style="position:absolute;left:397.60px;top:527.80px;width:20.60px;height:10.20px;border:1px solid #CAC7B4;border-right-color:#F4F3EC;border-bottom:none;box-sizing:border-box;"></div><svg style="position:absolute;left:420.00px;top:527.00px;" width="11.5" height="11.5" viewBox="0 0 11.5 11.5"><path d="M10.5 2.5 L2.5 10.5 M10.5 6 L6 10.5 M10.5 9.5 L9.5 10.5" stroke="#A8A694" stroke-width="1.1"/><path d="M10.5 3.5 L3.5 10.5 M10.5 7 L7 10.5" stroke="#fff" stroke-width="0.8"/></svg><div style="position:absolute;left:484.40px;top:123.00px;width:295.20px;height:304.80px;background:#7E9AE2;border-radius:7px 7px 0 0;"></div><div style="position:absolute;left:484.40px;top:142.00px;width:4.00px;height:285.80px;background:linear-gradient(90deg,#6A88D8 0%,#8CA6E8 45%,#B8C8F0 70%,#F0F4FA 100%);"></div><div style="position:absolute;left:775.80px;top:142.00px;width:3.80px;height:285.80px;background:linear-gradient(270deg,#6A88D8 0%,#8CA6E8 45%,#B8C8F0 70%,#F0F4FA 100%);"></div><div style="position:absolute;left:484.40px;top:123.00px;width:295.20px;height:19.20px;background:linear-gradient(#B2C8F4 0%,#98B2EE 12%,#88A4E8 40%,#7E9AE2 80%,#7690DA 100%);border-radius:7px 7px 0 0;"></div><div style="position:absolute;left:484.40px;top:424.00px;width:295.20px;height:3.80px;background:linear-gradient(#B4C4EC 0%,#8AA2E2 25%,#4E6CCC 50%,#2E4CB4 100%);"></div><div style="position:absolute;left:488.40px;top:142.20px;width:287.40px;height:281.80px;background:#ECE9D8;"></div><div style="position:absolute;left:489.40px;top:128.60px;width:9.20px;height:8.40px;background:#D8D8D8;border:1px solid #1E1E1E;box-sizing:border-box;"></div><div style="position:absolute;left:490.80px;top:130.00px;width:6.40px;height:4.20px;background:#243040;"></div><div style="position:absolute;left:491.60px;top:131.00px;width:2.40px;height:1.60px;background:#60C060;"></div><div style="position:absolute;left:489.00px;top:136.60px;width:10.00px;height:2.40px;background:#2A2A2A;"></div><div style="position:absolute;left:490.00px;top:137.30px;width:8.00px;height:0.90px;background:#999;"></div><div style="position:absolute;left:501.40px;top:129.43px;font-size:9.4px;line-height:9.4px;height:9.4px;color:#EEF2FC;font-weight:bold;white-space:pre;transform:scaleX(0.8994);transform-origin:0 0;text-shadow:0.8px 0.8px 0 #6478B8;">Správce úloh systému Windows</div><div style="position:absolute;left:733.00px;top:128.00px;width:13.20px;height:12.20px;background:linear-gradient(135deg,#B8CCF4,#7C9CE8 45%,#6A8ADC);border:1px solid #E4ECFA;border-radius:2.5px;box-sizing:border-box;"></div><div style="position:absolute;left:736.70px;top:135.81px;width:3.70px;height:1.71px;background:#fff;"></div><div style="position:absolute;left:748.40px;top:128.00px;width:12.80px;height:12.20px;background:linear-gradient(135deg,#B8CCF4,#7C9CE8 45%,#6A8ADC);border:1px solid #E4ECFA;border-radius:2.5px;box-sizing:border-box;"></div><div style="position:absolute;left:751.22px;top:131.17px;width:7.17px;height:5.61px;border:1px solid #fff;border-top-width:2px;box-sizing:border-box;"></div><div style="position:absolute;left:764.00px;top:128.00px;width:12.20px;height:12.20px;background:linear-gradient(135deg,#E8B4BC,#D08894 45%,#C07080);border:1px solid #F0E8F0;border-radius:2.5px;box-sizing:border-box;"></div><svg style="position:absolute;left:764.00px;top:128.00px;" width="12.2" height="12.2" viewBox="0 0 12.2 12.2"><path d="M3.66 3.42 L8.54 8.78 M8.54 3.42 L3.66 8.78" stroke="#FFF4EE" stroke-width="1.2"/></svg><div style="position:absolute;left:490.50px;top:144.60px;font-size:8.6px;line-height:8.6px;height:8.6px;color:#ADA996;font-weight:normal;white-space:pre;transform:scaleX(0.8041);transform-origin:0 0;text-shadow:0 0 0.20px #ADA996;">Soubor</div><div style="position:absolute;left:521.30px;top:144.60px;font-size:8.6px;line-height:8.6px;height:8.6px;color:#ADA996;font-weight:normal;white-space:pre;transform:scaleX(0.8253);transform-origin:0 0;text-shadow:0 0 0.20px #ADA996;">Možnosti</div><div style="position:absolute;left:557.70px;top:144.60px;font-size:8.6px;line-height:8.6px;height:8.6px;color:#ADA996;font-weight:normal;white-space:pre;transform:scaleX(0.8305);transform-origin:0 0;text-shadow:0 0 0.20px #ADA996;">Zobrazit</div><div style="position:absolute;left:591.80px;top:144.60px;font-size:8.6px;line-height:8.6px;height:8.6px;color:#ADA996;font-weight:normal;white-space:pre;transform:scaleX(0.8340);transform-origin:0 0;text-shadow:0 0 0.20px #ADA996;">Nápověda</div><div style="position:absolute;left:487.60px;top:156.00px;width:289.00px;height:1.00px;background:#C4C1AC;"></div><div style="position:absolute;left:487.60px;top:157.00px;width:289.00px;height:1.00px;background:#FBFAF4;"></div><div style="position:absolute;left:490.50px;top:173.50px;width:283.10px;height:231.10px;background:#EFEEE5;border:1px solid #A4A89C;box-sizing:border-box;"></div><div style="position:absolute;left:491.50px;top:161.00px;width:32.90px;height:13.00px;background:linear-gradient(#FFFFFF,#F4F4EE 60%,#E6E4DA);border:1px solid #A4AAAC;border-bottom:none;border-radius:2px 2px 0 0;box-sizing:border-box;"></div><div style="position:absolute;left:495.10px;top:163.80px;font-size:8.6px;line-height:8.6px;height:8.6px;color:#000;font-weight:normal;white-space:pre;transform:scaleX(0.8131);transform-origin:0 0;text-shadow:0 0 0.24px #000;">Aplikace</div><div style="position:absolute;left:525.00px;top:161.00px;width:33.60px;height:13.00px;background:linear-gradient(#FFFFFF,#F4F4EE 60%,#E6E4DA);border:1px solid #A4AAAC;border-bottom:none;border-radius:2px 2px 0 0;box-sizing:border-box;"></div><div style="position:absolute;left:528.60px;top:163.80px;font-size:8.6px;line-height:8.6px;height:8.6px;color:#000;font-weight:normal;white-space:pre;transform:scaleX(0.8124);transform-origin:0 0;text-shadow:0 0 0.24px #000;">Procesy</div><div style="position:absolute;left:588.60px;top:161.00px;width:25.60px;height:13.00px;background:linear-gradient(#FFFFFF,#F4F4EE 60%,#E6E4DA);border:1px solid #A4AAAC;border-bottom:none;border-radius:2px 2px 0 0;box-sizing:border-box;"></div><div style="position:absolute;left:592.20px;top:163.80px;font-size:8.6px;line-height:8.6px;height:8.6px;color:#000;font-weight:normal;white-space:pre;transform:scaleX(0.7958);transform-origin:0 0;text-shadow:0 0 0.24px #000;">Sítě</div><div style="position:absolute;left:616.40px;top:161.00px;width:35.20px;height:13.00px;background:linear-gradient(#FFFFFF,#F4F4EE 60%,#E6E4DA);border:1px solid #A4AAAC;border-bottom:none;border-radius:2px 2px 0 0;box-sizing:border-box;"></div><div style="position:absolute;left:620.00px;top:163.80px;font-size:8.6px;line-height:8.6px;height:8.6px;color:#000;font-weight:normal;white-space:pre;transform:scaleX(0.8132);transform-origin:0 0;text-shadow:0 0 0.24px #000;">Uživatelé</div><div style="position:absolute;left:558.60px;top:159.40px;width:30.00px;height:15.20px;background:#FCFCFA;border:1px solid #919B9C;border-bottom:none;border-radius:2px 2px 0 0;box-sizing:border-box;"></div><div style="position:absolute;left:559.00px;top:159.40px;width:29.20px;height:2.00px;background:#F2B040;border-radius:2px 2px 0 0;"></div><div style="position:absolute;left:562.50px;top:162.60px;font-size:8.6px;line-height:8.6px;height:8.6px;color:#000;font-weight:normal;white-space:pre;transform:scaleX(0.8076);transform-origin:0 0;text-shadow:0 0 0.24px #000;">Výkon</div><div style="position:absolute;left:503.00px;top:184.40px;width:76.60px;height:53.60px;background:#F2F1EA;border:1px solid #E2E0D2;border-radius:3px;box-sizing:border-box;"></div><div style="position:absolute;left:591.00px;top:184.40px;width:172.60px;height:53.60px;background:#F2F1EA;border:1px solid #E2E0D2;border-radius:3px;box-sizing:border-box;"></div><div style="position:absolute;left:503.00px;top:246.00px;width:76.60px;height:54.00px;background:#F2F1EA;border:1px solid #E2E0D2;border-radius:3px;box-sizing:border-box;"></div><div style="position:absolute;left:591.00px;top:246.00px;width:172.60px;height:54.00px;background:#F2F1EA;border:1px solid #E2E0D2;border-radius:3px;box-sizing:border-box;"></div><div style="position:absolute;left:507.00px;top:180.00px;font-size:8.6px;line-height:8.6px;height:8.6px;color:#20388A;font-weight:normal;white-space:pre;transform:scaleX(0.7896);transform-origin:0 0;text-shadow:0 0 0.24px #20388A;">Využití CPU</div><div style="position:absolute;left:597.50px;top:180.00px;font-size:8.6px;line-height:8.6px;height:8.6px;color:#20388A;font-weight:normal;white-space:pre;transform:scaleX(0.8081);transform-origin:0 0;text-shadow:0 0 0.24px #20388A;">Historie využití CPU</div><div style="position:absolute;left:507.00px;top:241.80px;font-size:8.6px;line-height:8.6px;height:8.6px;color:#20388A;font-weight:normal;white-space:pre;transform:scaleX(0.8255);transform-origin:0 0;text-shadow:0 0 0.24px #20388A;">Stránkovací soubor</div><div style="position:absolute;left:597.50px;top:241.80px;font-size:8.6px;line-height:8.6px;height:8.6px;color:#20388A;font-weight:normal;white-space:pre;transform:scaleX(0.8305);transform-origin:0 0;text-shadow:0 0 0.24px #20388A;">Historie využití stránkovacího souboru</div><div style="position:absolute;left:506.80px;top:193.80px;width:64.80px;height:38.40px;background:#000;"></div><div style="position:absolute;left:508.00px;top:255.80px;width:64.00px;height:37.80px;background:#000;"></div><div style="position:absolute;left:528.00px;top:198.60px;width:11.00px;height:1.10px;background:repeating-linear-gradient(90deg,#1E861E 0 3.2px,transparent 3.2px 4px);"></div><div style="position:absolute;left:540.00px;top:198.60px;width:11.00px;height:1.10px;background:repeating-linear-gradient(90deg,#1E861E 0 3.2px,transparent 3.2px 4px);"></div><div style="position:absolute;left:528.00px;top:200.68px;width:11.00px;height:1.10px;background:repeating-linear-gradient(90deg,#1E861E 0 3.2px,transparent 3.2px 4px);"></div><div style="position:absolute;left:540.00px;top:200.68px;width:11.00px;height:1.10px;background:repeating-linear-gradient(90deg,#1E861E 0 3.2px,transparent 3.2px 4px);"></div><div style="position:absolute;left:528.00px;top:202.76px;width:11.00px;height:1.10px;background:repeating-linear-gradient(90deg,#1E861E 0 3.2px,transparent 3.2px 4px);"></div><div style="position:absolute;left:540.00px;top:202.76px;width:11.00px;height:1.10px;background:repeating-linear-gradient(90deg,#1E861E 0 3.2px,transparent 3.2px 4px);"></div><div style="position:absolute;left:528.00px;top:204.84px;width:11.00px;height:1.10px;background:repeating-linear-gradient(90deg,#1E861E 0 3.2px,transparent 3.2px 4px);"></div><div style="position:absolute;left:540.00px;top:204.84px;width:11.00px;height:1.10px;background:repeating-linear-gradient(90deg,#1E861E 0 3.2px,transparent 3.2px 4px);"></div><div style="position:absolute;left:528.00px;top:206.92px;width:11.00px;height:1.10px;background:repeating-linear-gradient(90deg,#1E861E 0 3.2px,transparent 3.2px 4px);"></div><div style="position:absolute;left:540.00px;top:206.92px;width:11.00px;height:1.10px;background:repeating-linear-gradient(90deg,#1E861E 0 3.2px,transparent 3.2px 4px);"></div><div style="position:absolute;left:528.00px;top:209.00px;width:11.00px;height:1.20px;background:#22D822;"></div><div style="position:absolute;left:540.00px;top:209.00px;width:11.00px;height:1.20px;background:#22D822;"></div><div style="position:absolute;left:528.00px;top:211.08px;width:11.00px;height:1.20px;background:#22D822;"></div><div style="position:absolute;left:540.00px;top:211.08px;width:11.00px;height:1.20px;background:#22D822;"></div><div style="position:absolute;left:528.00px;top:213.16px;width:11.00px;height:1.20px;background:#22D822;"></div><div style="position:absolute;left:540.00px;top:213.16px;width:11.00px;height:1.20px;background:#22D822;"></div><div style="position:absolute;left:528.00px;top:215.24px;width:11.00px;height:1.20px;background:#22D822;"></div><div style="position:absolute;left:540.00px;top:215.24px;width:11.00px;height:1.20px;background:#22D822;"></div><div style="position:absolute;left:530.00px;top:221.40px;font-size:8.6px;line-height:8.6px;height:8.6px;color:#1CA01C;font-weight:normal;white-space:pre;transform:scaleX(0.8673);transform-origin:0 0;text-shadow:0 0 0.20px #1CA01C;">41 %</div><div style="position:absolute;left:529.00px;top:259.80px;width:10.50px;height:1.10px;background:repeating-linear-gradient(90deg,#1E861E 0 3.2px,transparent 3.2px 4px);"></div><div style="position:absolute;left:540.50px;top:259.80px;width:10.50px;height:1.10px;background:repeating-linear-gradient(90deg,#1E861E 0 3.2px,transparent 3.2px 4px);"></div><div style="position:absolute;left:529.00px;top:261.88px;width:10.50px;height:1.10px;background:repeating-linear-gradient(90deg,#1E861E 0 3.2px,transparent 3.2px 4px);"></div><div style="position:absolute;left:540.50px;top:261.88px;width:10.50px;height:1.10px;background:repeating-linear-gradient(90deg,#1E861E 0 3.2px,transparent 3.2px 4px);"></div><div style="position:absolute;left:529.00px;top:263.96px;width:10.50px;height:1.10px;background:repeating-linear-gradient(90deg,#1E861E 0 3.2px,transparent 3.2px 4px);"></div><div style="position:absolute;left:540.50px;top:263.96px;width:10.50px;height:1.10px;background:repeating-linear-gradient(90deg,#1E861E 0 3.2px,transparent 3.2px 4px);"></div><div style="position:absolute;left:529.00px;top:266.04px;width:10.50px;height:1.10px;background:repeating-linear-gradient(90deg,#1E861E 0 3.2px,transparent 3.2px 4px);"></div><div style="position:absolute;left:540.50px;top:266.04px;width:10.50px;height:1.10px;background:repeating-linear-gradient(90deg,#1E861E 0 3.2px,transparent 3.2px 4px);"></div><div style="position:absolute;left:529.00px;top:268.12px;width:10.50px;height:1.10px;background:repeating-linear-gradient(90deg,#1E861E 0 3.2px,transparent 3.2px 4px);"></div><div style="position:absolute;left:540.50px;top:268.12px;width:10.50px;height:1.10px;background:repeating-linear-gradient(90deg,#1E861E 0 3.2px,transparent 3.2px 4px);"></div><div style="position:absolute;left:529.00px;top:270.20px;width:10.50px;height:1.10px;background:repeating-linear-gradient(90deg,#1E861E 0 3.2px,transparent 3.2px 4px);"></div><div style="position:absolute;left:540.50px;top:270.20px;width:10.50px;height:1.10px;background:repeating-linear-gradient(90deg,#1E861E 0 3.2px,transparent 3.2px 4px);"></div><div style="position:absolute;left:529.00px;top:272.28px;width:10.50px;height:1.10px;background:repeating-linear-gradient(90deg,#1E861E 0 3.2px,transparent 3.2px 4px);"></div><div style="position:absolute;left:540.50px;top:272.28px;width:10.50px;height:1.10px;background:repeating-linear-gradient(90deg,#1E861E 0 3.2px,transparent 3.2px 4px);"></div><div style="position:absolute;left:529.00px;top:274.36px;width:10.50px;height:1.10px;background:repeating-linear-gradient(90deg,#1E861E 0 3.2px,transparent 3.2px 4px);"></div><div style="position:absolute;left:540.50px;top:274.36px;width:10.50px;height:1.10px;background:repeating-linear-gradient(90deg,#1E861E 0 3.2px,transparent 3.2px 4px);"></div><div style="position:absolute;left:529.00px;top:277.00px;width:22.00px;height:1.50px;background:#22D822;"></div><div style="position:absolute;left:528.20px;top:283.00px;font-size:8.6px;line-height:8.6px;height:8.6px;color:#1CA01C;font-weight:normal;white-space:pre;transform:scaleX(0.7625);transform-origin:0 0;text-shadow:0 0 0.20px #1CA01C;">618 MB</div><svg style="position:absolute;left:597.00px;top:193.00px;" width="161" height="39" viewBox="0 0 161 39"><rect x="0.50" y="0.60" width="160.30" height="38.40" fill="#020A04"/><line x1="6.50" y1="0.60" x2="6.50" y2="39.00" stroke="#247A50" stroke-width="1"/><line x1="14.50" y1="0.60" x2="14.50" y2="39.00" stroke="#247A50" stroke-width="1"/><line x1="22.50" y1="0.60" x2="22.50" y2="39.00" stroke="#247A50" stroke-width="1"/><line x1="30.50" y1="0.60" x2="30.50" y2="39.00" stroke="#247A50" stroke-width="1"/><line x1="38.50" y1="0.60" x2="38.50" y2="39.00" stroke="#247A50" stroke-width="1"/><line x1="46.50" y1="0.60" x2="46.50" y2="39.00" stroke="#247A50" stroke-width="1"/><line x1="54.50" y1="0.60" x2="54.50" y2="39.00" stroke="#247A50" stroke-width="1"/><line x1="62.50" y1="0.60" x2="62.50" y2="39.00" stroke="#247A50" stroke-width="1"/><line x1="71.50" y1="0.60" x2="71.50" y2="39.00" stroke="#247A50" stroke-width="1"/><line x1="79.50" y1="0.60" x2="79.50" y2="39.00" stroke="#247A50" stroke-width="1"/><line x1="87.50" y1="0.60" x2="87.50" y2="39.00" stroke="#247A50" stroke-width="1"/><line x1="95.50" y1="0.60" x2="95.50" y2="39.00" stroke="#247A50" stroke-width="1"/><line x1="103.50" y1="0.60" x2="103.50" y2="39.00" stroke="#247A50" stroke-width="1"/><line x1="111.50" y1="0.60" x2="111.50" y2="39.00" stroke="#247A50" stroke-width="1"/><line x1="119.50" y1="0.60" x2="119.50" y2="39.00" stroke="#247A50" stroke-width="1"/><line x1="127.50" y1="0.60" x2="127.50" y2="39.00" stroke="#247A50" stroke-width="1"/><line x1="135.50" y1="0.60" x2="135.50" y2="39.00" stroke="#247A50" stroke-width="1"/><line x1="143.50" y1="0.60" x2="143.50" y2="39.00" stroke="#247A50" stroke-width="1"/><line x1="151.50" y1="0.60" x2="151.50" y2="39.00" stroke="#247A50" stroke-width="1"/><line x1="159.50" y1="0.60" x2="159.50" y2="39.00" stroke="#247A50" stroke-width="1"/><line x1="0.50" y1="9.50" x2="160.80" y2="9.50" stroke="#1A6040" stroke-width="1"/><line x1="0.50" y1="17.50" x2="160.80" y2="17.50" stroke="#1A6040" stroke-width="1"/><line x1="0.50" y1="25.50" x2="160.80" y2="25.50" stroke="#1A6040" stroke-width="1"/><line x1="0.50" y1="33.50" x2="160.80" y2="33.50" stroke="#1A6040" stroke-width="1"/><path d="M0.5 30.1 L1.5 36.1 L2.5 26.1 L3.5 33.7 L4.5 29.6 L5.5 35.2 L6.5 23.2 L7.5 34.0 L8.5 27.8 L9.5 35.8 L10.5 33.4 L11.5 33.7 L12.5 30.7 L13.5 34.1 L14.5 27.4 L15.5 34.2 L16.5 32.1 L17.5 35.0 L18.5 29.8 L19.5 33.7 L20.5 26.3 L21.5 34.8 L22.5 31.3 L23.5 34.7 L24.5 32.3 L25.5 34.5 L26.5 31.6 L27.5 37.0 L28.5 30.7 L29.5 37.4 L30.5 27.3 L31.5 34.1 L32.5 29.7 L33.5 36.2 L34.5 31.8 L35.5 37.0 L36.5 32.3 L37.5 35.9 L38.5 31.3 L39.5 36.9 L40.5 31.4 L41.5 36.2 L42.5 23.5 L43.5 36.8 L44.5 31.0 L45.5 36.2 L46.5 21.7 L47.5 33.7 L48.5 30.0 L49.5 34.5 L50.5 33.0 L51.5 33.8 L52.5 31.7 L53.5 37.0 L54.5 33.0 L55.5 34.6 L56.5 30.9 L57.5 37.0 L58.5 30.1 L59.5 34.2 L60.5 26.5 L61.5 35.9 L62.5 29.5 L63.5 35.2 L64.5 31.8 L65.5 37.3 L66.5 31.6 L67.5 36.0 L68.5 29.7 L69.5 37.1 L70.5 33.0 L71.5 36.7 L72.5 31.1 L73.5 33.9 L74.5 29.7 L75.5 33.8 L76.5 26.0 L77.5 33.7 L78.5 22.2 L79.5 33.6 L80.5 32.0 L81.5 34.1 L82.5 30.9 L83.5 35.0 L84.5 28.0 L85.5 35.4 L86.5 29.8 L87.5 33.9 L88.5 30.6 L89.5 36.8 L90.5 25.3 L91.5 21.7 L92.5 21.7 L93.5 25.1 L94.5 17.3 L95.5 18.2 L96.5 24.4 L97.5 29.2 L98.5 33.0 L99.5 36.3 L100.5 31.0 L101.5 34.2 L102.5 31.6 L103.5 36.6 L104.5 30.4 L105.5 36.7 L106.5 32.9 L107.5 36.7 L108.5 32.5 L109.5 34.4 L110.5 30.9 L111.5 33.6 L112.5 22.9 L113.5 37.3 L114.5 33.2 L115.5 37.5 L116.5 25.6 L117.5 7.7 L118.5 3.7 L119.5 5.5 L120.5 3.1 L121.5 2.5 L122.5 4.6 L123.5 4.8 L124.5 2.7 L125.5 4.3 L126.5 5.0 L127.5 3.6 L128.5 3.4 L129.5 5.7 L130.5 6.4 L131.5 5.4 L132.5 4.6 L133.5 6.8 L134.5 9.4 L135.5 6.6 L136.5 16.2 L137.5 23.6 L138.5 13.9 L139.5 6.0 L140.5 11.8 L141.5 6.9 L142.5 5.2 L143.5 7.6 L144.5 11.6 L145.5 16.2 L146.5 22.4 L147.5 25.9 L148.5 28.1 L149.5 33.4 L150.5 36.1 L151.5 31.7 L152.5 34.0 L153.5 22.6 L154.5 37.2 L155.5 33.0 L156.5 36.8 L157.5 25.9 L158.5 34.5 L159.5 30.5 L160.5 35.2" stroke="#28F028" stroke-width="0.8" fill="none"/></svg><svg style="position:absolute;left:597.00px;top:255.00px;" width="161" height="39" viewBox="0 0 161 39"><rect x="0.50" y="0.60" width="160.30" height="38.00" fill="#020A04"/><line x1="6.50" y1="0.60" x2="6.50" y2="38.60" stroke="#247A50" stroke-width="1"/><line x1="14.50" y1="0.60" x2="14.50" y2="38.60" stroke="#247A50" stroke-width="1"/><line x1="22.50" y1="0.60" x2="22.50" y2="38.60" stroke="#247A50" stroke-width="1"/><line x1="30.50" y1="0.60" x2="30.50" y2="38.60" stroke="#247A50" stroke-width="1"/><line x1="38.50" y1="0.60" x2="38.50" y2="38.60" stroke="#247A50" stroke-width="1"/><line x1="46.50" y1="0.60" x2="46.50" y2="38.60" stroke="#247A50" stroke-width="1"/><line x1="54.50" y1="0.60" x2="54.50" y2="38.60" stroke="#247A50" stroke-width="1"/><line x1="62.50" y1="0.60" x2="62.50" y2="38.60" stroke="#247A50" stroke-width="1"/><line x1="71.50" y1="0.60" x2="71.50" y2="38.60" stroke="#247A50" stroke-width="1"/><line x1="79.50" y1="0.60" x2="79.50" y2="38.60" stroke="#247A50" stroke-width="1"/><line x1="87.50" y1="0.60" x2="87.50" y2="38.60" stroke="#247A50" stroke-width="1"/><line x1="95.50" y1="0.60" x2="95.50" y2="38.60" stroke="#247A50" stroke-width="1"/><line x1="103.50" y1="0.60" x2="103.50" y2="38.60" stroke="#247A50" stroke-width="1"/><line x1="111.50" y1="0.60" x2="111.50" y2="38.60" stroke="#247A50" stroke-width="1"/><line x1="119.50" y1="0.60" x2="119.50" y2="38.60" stroke="#247A50" stroke-width="1"/><line x1="127.50" y1="0.60" x2="127.50" y2="38.60" stroke="#247A50" stroke-width="1"/><line x1="135.50" y1="0.60" x2="135.50" y2="38.60" stroke="#247A50" stroke-width="1"/><line x1="143.50" y1="0.60" x2="143.50" y2="38.60" stroke="#247A50" stroke-width="1"/><line x1="151.50" y1="0.60" x2="151.50" y2="38.60" stroke="#247A50" stroke-width="1"/><line x1="159.50" y1="0.60" x2="159.50" y2="38.60" stroke="#247A50" stroke-width="1"/><line x1="0.50" y1="9.50" x2="160.80" y2="9.50" stroke="#1A6040" stroke-width="1"/><line x1="0.50" y1="17.50" x2="160.80" y2="17.50" stroke="#1A6040" stroke-width="1"/><line x1="0.50" y1="25.50" x2="160.80" y2="25.50" stroke="#1A6040" stroke-width="1"/><line x1="0.50" y1="33.50" x2="160.80" y2="33.50" stroke="#1A6040" stroke-width="1"/><path d="M3 287.5 L127 287.5 M127 288.8 L160.8 288.8" transform="translate(0,-255)" stroke="#A8A83A" stroke-width="1.8" fill="none"/></svg><div style="position:absolute;left:501.50px;top:309.60px;width:113.50px;height:37.80px;background:#F2F1EA;border:1px solid #E2E0D2;border-radius:3px;box-sizing:border-box;"></div><div style="position:absolute;left:507.00px;top:305.60px;font-size:8.6px;line-height:8.6px;height:8.6px;color:#20388A;font-weight:normal;white-space:pre;transform:scaleX(0.8099);transform-origin:0 0;text-shadow:0 0 0.24px #20388A;">Celkem</div><div style="position:absolute;left:507.00px;top:317.10px;font-size:8.6px;line-height:8.6px;height:8.6px;color:#000;font-weight:normal;white-space:pre;transform:scaleX(0.8172);transform-origin:0 0;text-shadow:0 0 0.24px #000;">Popisovače</div><div style="position:absolute;left:586.51px;top:317.10px;font-size:8.6px;line-height:8.6px;height:8.6px;color:#000;font-weight:normal;white-space:pre;transform:scaleX(0.8651);transform-origin:0 0;text-shadow:0 0 0.24px #000;">13101</div><div style="position:absolute;left:507.00px;top:326.80px;font-size:8.6px;line-height:8.6px;height:8.6px;color:#000;font-weight:normal;white-space:pre;transform:scaleX(0.8175);transform-origin:0 0;text-shadow:0 0 0.24px #000;">Podprocesy</div><div style="position:absolute;left:594.79px;top:326.80px;font-size:8.6px;line-height:8.6px;height:8.6px;color:#000;font-weight:normal;white-space:pre;transform:scaleX(0.8651);transform-origin:0 0;text-shadow:0 0 0.24px #000;">528</div><div style="position:absolute;left:507.00px;top:336.30px;font-size:8.6px;line-height:8.6px;height:8.6px;color:#000;font-weight:normal;white-space:pre;transform:scaleX(0.8124);transform-origin:0 0;text-shadow:0 0 0.24px #000;">Procesy</div><div style="position:absolute;left:598.92px;top:336.30px;font-size:8.6px;line-height:8.6px;height:8.6px;color:#000;font-weight:normal;white-space:pre;transform:scaleX(0.8651);transform-origin:0 0;text-shadow:0 0 0.24px #000;">35</div><div style="position:absolute;left:624.00px;top:309.60px;width:139.00px;height:37.80px;background:#F2F1EA;border:1px solid #E2E0D2;border-radius:3px;box-sizing:border-box;"></div><div style="position:absolute;left:629.50px;top:305.60px;font-size:8.6px;line-height:8.6px;height:8.6px;color:#20388A;font-weight:normal;white-space:pre;transform:scaleX(0.8322);transform-origin:0 0;text-shadow:0 0 0.24px #20388A;">Fyzická paměť (kB)</div><div style="position:absolute;left:629.50px;top:317.10px;font-size:8.6px;line-height:8.6px;height:8.6px;color:#000;font-weight:normal;white-space:pre;transform:scaleX(0.8099);transform-origin:0 0;text-shadow:0 0 0.24px #000;">Celkem</div><div style="position:absolute;left:728.24px;top:317.10px;font-size:8.6px;line-height:8.6px;height:8.6px;color:#000;font-weight:normal;white-space:pre;transform:scaleX(0.8651);transform-origin:0 0;text-shadow:0 0 0.24px #000;">2086956</div><div style="position:absolute;left:629.50px;top:326.80px;font-size:8.6px;line-height:8.6px;height:8.6px;color:#000;font-weight:normal;white-space:pre;transform:scaleX(0.8231);transform-origin:0 0;text-shadow:0 0 0.24px #000;">K dispozici</div><div style="position:absolute;left:728.24px;top:326.80px;font-size:8.6px;line-height:8.6px;height:8.6px;color:#000;font-weight:normal;white-space:pre;transform:scaleX(0.8651);transform-origin:0 0;text-shadow:0 0 0.24px #000;">1306772</div><div style="position:absolute;left:629.50px;top:336.30px;font-size:8.6px;line-height:8.6px;height:8.6px;color:#000;font-weight:normal;white-space:pre;transform:scaleX(0.8240);transform-origin:0 0;text-shadow:0 0 0.24px #000;">Mezipaměť systému</div><div style="position:absolute;left:728.24px;top:336.30px;font-size:8.6px;line-height:8.6px;height:8.6px;color:#000;font-weight:normal;white-space:pre;transform:scaleX(0.8651);transform-origin:0 0;text-shadow:0 0 0.24px #000;">1091064</div><div style="position:absolute;left:501.50px;top:357.50px;width:113.50px;height:37.50px;background:#F2F1EA;border:1px solid #E2E0D2;border-radius:3px;box-sizing:border-box;"></div><div style="position:absolute;left:507.00px;top:353.80px;font-size:8.6px;line-height:8.6px;height:8.6px;color:#20388A;font-weight:normal;white-space:pre;transform:scaleX(0.8317);transform-origin:0 0;text-shadow:0 0 0.24px #20388A;">Využití paměti (kB)</div><div style="position:absolute;left:507.00px;top:364.70px;font-size:8.6px;line-height:8.6px;height:8.6px;color:#000;font-weight:normal;white-space:pre;transform:scaleX(0.8099);transform-origin:0 0;text-shadow:0 0 0.24px #000;">Celkem</div><div style="position:absolute;left:582.37px;top:364.70px;font-size:8.6px;line-height:8.6px;height:8.6px;color:#000;font-weight:normal;white-space:pre;transform:scaleX(0.8651);transform-origin:0 0;text-shadow:0 0 0.24px #000;">633844</div><div style="position:absolute;left:507.00px;top:374.70px;font-size:8.6px;line-height:8.6px;height:8.6px;color:#000;font-weight:normal;white-space:pre;transform:scaleX(0.7901);transform-origin:0 0;text-shadow:0 0 0.24px #000;">Mez</div><div style="position:absolute;left:578.24px;top:374.70px;font-size:8.6px;line-height:8.6px;height:8.6px;color:#000;font-weight:normal;white-space:pre;transform:scaleX(0.8651);transform-origin:0 0;text-shadow:0 0 0.24px #000;">4025228</div><div style="position:absolute;left:507.00px;top:384.70px;font-size:8.6px;line-height:8.6px;height:8.6px;color:#000;font-weight:normal;white-space:pre;transform:scaleX(0.8091);transform-origin:0 0;text-shadow:0 0 0.24px #000;">Špička</div><div style="position:absolute;left:578.24px;top:384.70px;font-size:8.6px;line-height:8.6px;height:8.6px;color:#000;font-weight:normal;white-space:pre;transform:scaleX(0.8651);transform-origin:0 0;text-shadow:0 0 0.24px #000;">1485640</div><div style="position:absolute;left:624.00px;top:357.50px;width:139.00px;height:37.50px;background:#F2F1EA;border:1px solid #E2E0D2;border-radius:3px;box-sizing:border-box;"></div><div style="position:absolute;left:629.50px;top:353.80px;font-size:8.6px;line-height:8.6px;height:8.6px;color:#20388A;font-weight:normal;white-space:pre;transform:scaleX(0.8321);transform-origin:0 0;text-shadow:0 0 0.24px #20388A;">Paměť jádra (kB)</div><div style="position:absolute;left:629.50px;top:364.70px;font-size:8.6px;line-height:8.6px;height:8.6px;color:#000;font-weight:normal;white-space:pre;transform:scaleX(0.8099);transform-origin:0 0;text-shadow:0 0 0.24px #000;">Celkem</div><div style="position:absolute;left:736.51px;top:364.70px;font-size:8.6px;line-height:8.6px;height:8.6px;color:#000;font-weight:normal;white-space:pre;transform:scaleX(0.8651);transform-origin:0 0;text-shadow:0 0 0.24px #000;">72084</div><div style="position:absolute;left:629.50px;top:374.70px;font-size:8.6px;line-height:8.6px;height:8.6px;color:#000;font-weight:normal;white-space:pre;transform:scaleX(0.8181);transform-origin:0 0;text-shadow:0 0 0.24px #000;">Stránkováno</div><div style="position:absolute;left:736.51px;top:374.70px;font-size:8.6px;line-height:8.6px;height:8.6px;color:#000;font-weight:normal;white-space:pre;transform:scaleX(0.8651);transform-origin:0 0;text-shadow:0 0 0.24px #000;">58448</div><div style="position:absolute;left:629.50px;top:384.70px;font-size:8.6px;line-height:8.6px;height:8.6px;color:#000;font-weight:normal;white-space:pre;transform:scaleX(0.8191);transform-origin:0 0;text-shadow:0 0 0.24px #000;">Nestránkováno</div><div style="position:absolute;left:736.51px;top:384.70px;font-size:8.6px;line-height:8.6px;height:8.6px;color:#000;font-weight:normal;white-space:pre;transform:scaleX(0.8651);transform-origin:0 0;text-shadow:0 0 0.24px #000;">13636</div><div style="position:absolute;left:487.60px;top:409.40px;width:289.00px;height:1.00px;background:#CAC7B4;"></div><div style="position:absolute;left:487.60px;top:410.40px;width:289.00px;height:0.80px;background:#FBFAF4;"></div><div style="position:absolute;left:550.20px;top:411.20px;width:1.00px;height:12.40px;background:#D2CFBC;"></div><div style="position:absolute;left:630.30px;top:411.20px;width:1.00px;height:12.40px;background:#D2CFBC;"></div><div style="position:absolute;left:488.00px;top:413.60px;font-size:8.6px;line-height:8.6px;height:8.6px;color:#000;font-weight:normal;white-space:pre;transform:scaleX(0.8376);transform-origin:0 0;text-shadow:0 0 0.24px #000;">Procesy: 35</div><div style="position:absolute;left:554.00px;top:413.60px;font-size:8.6px;line-height:8.6px;height:8.6px;color:#000;font-weight:normal;white-space:pre;transform:scaleX(0.8286);transform-origin:0 0;text-shadow:0 0 0.24px #000;">Využití CPU: 41%</div><div style="position:absolute;left:634.00px;top:413.60px;font-size:8.6px;line-height:8.6px;height:8.6px;color:#000;font-weight:normal;white-space:pre;transform:scaleX(0.8387);transform-origin:0 0;text-shadow:0 0 0.24px #000;">Využití paměti: 618M / 3930M</div><svg style="position:absolute;left:766.00px;top:413.00px;" width="10" height="10" viewBox="0 0 10 10"><path d="M9 2 L2 9 M9 5 L5 9 M9 8 L8 9" stroke="#B0AE9C" stroke-width="1"/></svg><div style="position:absolute;left:0.00px;top:575.00px;width:781.00px;height:21.00px;background:#000;"></div><div style="position:absolute;left:7.50px;top:577.90px;font-size:16.6px;line-height:16.6px;height:16.6px;color:#EAEAEA;font-weight:bold;white-space:pre;transform:scaleX(0.8406);transform-origin:0 0;text-shadow:0 0 0.80px #EAEAEA;">IM</div><div style="position:absolute;left:28.00px;top:578.23px;font-size:16.2px;line-height:16.2px;height:16.2px;color:#E6E6E6;font-weight:normal;white-space:pre;transform:scaleX(0.7620);transform-origin:0 0;text-shadow:0 0 0.48px #E6E6E6;">ToolPack – Want to share screenshots? Visit <span style="color:#8CB8EE;-webkit-text-stroke:0.15px #8CB8EE;text-decoration:underline;text-decoration-thickness:1px;text-underline-offset:1.5px">www.imtoolpack.com</span></div>
</div></body></html>
